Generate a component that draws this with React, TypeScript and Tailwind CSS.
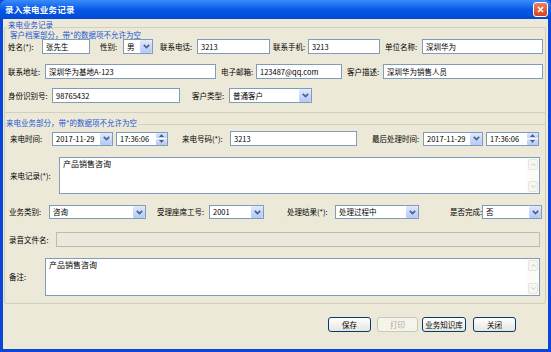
import React from "react";

const FONT = '"Noto Sans CJK SC", "Noto Sans", sans-serif';

function Label({ cls, children }: { cls: string; children: React.ReactNode }) {
  return <span className={`${cls} shrink-0 whitespace-nowrap text-black`}>{children}</span>;
}

function Input({ cls, value }: { cls: string; value?: string }) {
  return (
    <div className={`${cls} h-[15px] shrink-0 border border-[#7F9DB9] bg-white flex items-center px-[3px] whitespace-nowrap overflow-hidden`}>
      {value}
    </div>
  );
}

function Chevron() {
  return (
    <svg width="7" height="5" viewBox="0 0 7 5">
      <path d="M0.8 0.8 L3.5 3.6 L6.2 0.8" stroke="#4D6185" strokeWidth="1.7" fill="none" />
    </svg>
  );
}

function Select({ cls, value, h }: { cls: string; value?: string; h?: string }) {
  return (
    <div className={`${cls} ${h ?? "h-[14px]"} shrink-0 border border-[#7F9DB9] bg-white flex items-center pl-[3px] whitespace-nowrap overflow-hidden`}>
      <span className="flex-1">{value}</span>
      <div className="h-full w-[13px] border-l border-[#FFFFFF] rounded-[2px] bg-linear-to-b from-[#E0E9FE] to-[#B4C9F7] flex items-center justify-center">
        <Chevron />
      </div>
    </div>
  );
}

function Time({ cls, value }: { cls: string; value: string }) {
  return (
    <div className={`${cls} h-[14px] shrink-0 border border-[#7F9DB9] bg-white flex items-center pl-[3px] whitespace-nowrap overflow-hidden`}>
      <span className="flex-1">{value}</span>
      <div className="h-full w-[11px] flex flex-col gap-[1px]">
        <div className="flex-1 rounded-[1px] bg-linear-to-b from-[#E0E9FE] to-[#BCCEF8] flex items-center justify-center">
          <svg width="5" height="3" viewBox="0 0 5 3">
            <path d="M0 3 L2.5 0 L5 3 Z" fill="#4D6185" />
          </svg>
        </div>
        <div className="flex-1 rounded-[1px] bg-linear-to-b from-[#D4E0FC] to-[#B4C9F7] flex items-center justify-center">
          <svg width="5" height="3" viewBox="0 0 5 3">
            <path d="M0 0 L2.5 3 L5 0 Z" fill="#4D6185" />
          </svg>
        </div>
      </div>
    </div>
  );
}

function ScrollBar() {
  return (
    <div className="w-[12px] h-full bg-[#FBFBF8] flex flex-col justify-between p-[1px]">
      <div className="h-[11px] rounded-[2px] border border-[#E6E5DC] bg-[#F7F6F1] flex items-center justify-center">
        <svg width="5" height="3" viewBox="0 0 5 3">
          <path d="M0.5 2.6 L2.5 0.6 L4.5 2.6" stroke="#C9C8BE" strokeWidth="1" fill="none" />
        </svg>
      </div>
      <div className="h-[11px] rounded-[2px] border border-[#E6E5DC] bg-[#F7F6F1] flex items-center justify-center">
        <svg width="5" height="3" viewBox="0 0 5 3">
          <path d="M0.5 0.4 L2.5 2.4 L4.5 0.4" stroke="#C9C8BE" strokeWidth="1" fill="none" />
        </svg>
      </div>
    </div>
  );
}

function TextArea({ cls, value }: { cls: string; value: string }) {
  return (
    <div className={`${cls} shrink-0 border border-[#7F9DB9] bg-white flex`}>
      <div className="flex-1 pl-[3px] pt-[1px] text-[8px] leading-[10px]">{value}</div>
      <ScrollBar />
    </div>
  );
}

function Button({ cls, children, disabled }: { cls: string; children: React.ReactNode; disabled?: boolean }) {
  return (
    <div
      className={`${cls} h-[15px] shrink-0 rounded-[3px] border flex items-center justify-center ${
        disabled
          ? "border-[#C9C7BA] bg-[#F5F4EA] text-[#ACA899]"
          : "border-[#003C74] bg-linear-to-b from-[#FFFFFF] to-[#E6E5DD] text-black"
      }`}
    >
      {children}
    </div>
  );
}

export default function App() {
  return (
    <div
      className="w-[551px] h-[352px] bg-[#0A46D9] flex flex-col text-[7.5px] leading-none overflow-hidden"
      style={{ fontFamily: FONT }}
    >
      {/* Title bar */}
      <div className="h-[19px] shrink-0 flex items-center bg-linear-to-b from-[#3A8CFB] via-[#0758E6] to-[#0449D4] rounded-t-[6px]">
        <span className="ml-[5px] text-white font-bold text-[8.5px] tracking-[0.2px]">录入来电业务记录</span>
        <div className="ml-auto mr-[3px] w-[15px] h-[15px] rounded-[3px] border border-white bg-linear-to-b from-[#EE8060] to-[#D2441E] flex items-center justify-center">
          <svg width="7" height="7" viewBox="0 0 7 7">
            <path d="M1 1 L6 6 M6 1 L1 6" stroke="white" strokeWidth="1.6" />
          </svg>
        </div>
      </div>

      {/* Body */}
      <div className="flex-1 mx-[3px] mb-[3px] bg-[#ECE9D8] flex flex-col">
        {/* Outer group box */}
        <div className="relative mt-[8px] ml-[1px] w-[542px] h-[277px] border border-[#D0D0BF] rounded-[2px] flex flex-col">
          <span className="absolute -top-[7px] left-[2px] px-[1px] bg-[#ECE9D8] text-[#1F4FCF]">来电业务记录</span>

          {/* Section 1 */}
          <div className="mt-[3px] h-[8px] pl-[5px] flex items-center text-[#2457D4]">客户档案部分，带*的数据项不允许为空</div>

          <div className="mt-0 pl-[3px] flex items-center">
            <Label cls="w-[34px]">姓名(*):</Label>
            <Input cls="w-[48px]" value="张先生" />
            <Label cls="ml-[10px] w-[23px]">性别:</Label>
            <Select cls="w-[30px]" value="男" h="h-[15px]" />
            <Label cls="ml-[7px] w-[37px]">联系电话:</Label>
            <Input cls="w-[73px]" value="3213" />
            <Label cls="ml-[3px] w-[35px]">联系手机:</Label>
            <Input cls="w-[72px]" value="3213" />
            <Label cls="ml-[5px] w-[37px]">单位名称:</Label>
            <Input cls="w-[121px]" value="深圳华为" />
          </div>

          <div className="mt-[10px] pl-[3px] flex items-center">
            <Label cls="w-[37px]">联系地址:</Label>
            <Input cls="w-[171px]" value="深圳华为基地A-123" />
            <Label cls="ml-[5px] w-[35px]">电子邮箱:</Label>
            <Input cls="w-[86px]" value="123487@qq.com" />
            <Label cls="ml-[5px] w-[36px]">客户描述:</Label>
            <Input cls="w-[160px]" value="深圳华为销售人员" />
          </div>

          <div className="mt-[9px] pl-[3px] flex items-center">
            <Label cls="w-[44px]">身份识别号:</Label>
            <Input cls="w-[128px]" value="98765432" />
            <Label cls="ml-[12px] w-[37px]">客户类型:</Label>
            <Select cls="w-[83px]" value="普通客户" h="h-[15px]" />
          </div>

          <div className="mt-[9px] h-[1px] bg-[#D0D0BF]" />

          {/* Section 2 */}
          <div className="relative mt-[11px] border-t border-[#D0D0BF] flex flex-col">
            <span className="absolute -top-[6px] left-[1px] pr-[1px] bg-[#ECE9D8] text-[#2457D4]">来电业务部分，带*的数据项不允许为空</span>

            <div className="mt-[6px] pl-[5px] flex items-center">
              <Label cls="w-[42px]">来电时间:</Label>
              <Select cls="w-[61px]" value="2017-11-29" />
              <Time cls="ml-[3px] w-[52px]" value="17:36:06" />
              <Label cls="ml-[14px] w-[48px]">来电号码(*):</Label>
              <Input cls="w-[127px]" value="3213" />
              <Label cls="ml-[15px] w-[51px]">最后处理时间:</Label>
              <Select cls="w-[60px]" value="2017-11-29" />
              <Time cls="ml-[3px] w-[53px]" value="17:36:06" />
            </div>

            <div className="mt-[11px] pl-[5px] flex items-center">
              <Label cls="w-[49px]">来电记录(*):</Label>
              <TextArea cls="w-[481px] h-[37px]" value="产品销售咨询" />
            </div>

            <div className="mt-[11px] pl-[4px] flex items-center">
              <Label cls="w-[40px]">业务类别:</Label>
              <Select cls="w-[97px]" value="咨询" />
              <Label cls="ml-[11px] w-[52px]">受理座席工号:</Label>
              <Select cls="w-[55px]" value="2001" />
              <Label cls="ml-[23px] w-[48px]">处理结果(*):</Label>
              <Select cls="w-[84px]" value="处理过程中" />
              <Label cls="ml-[31px] w-[32px]">是否完成:</Label>
              <Select cls="w-[60px]" value="否" />
            </div>

            <div className="mt-[13px] pl-[4px] flex items-center">
              <Label cls="w-[47px]">录音文件名:</Label>
              <div className="w-[484px] h-[15px] shrink-0 border border-[#BDBCAE] bg-[#EBE9DB]" />
            </div>

            <div className="mt-[11px] pl-[4px] flex items-center">
              <Label cls="w-[36px]">备注:</Label>
              <TextArea cls="w-[495px] h-[38px]" value="产品销售咨询" />
            </div>
          </div>
        </div>

        {/* Buttons */}
        <div className="mt-[13px] mr-[32px] flex justify-end items-center">
          <Button cls="w-[43px]">保存</Button>
          <Button cls="ml-[6px] w-[41px]" disabled>
            打印
          </Button>
          <Button cls="ml-[4px] w-[44px]">业务知识库</Button>
          <Button cls="ml-[7px] w-[43px]">关闭</Button>
        </div>
      </div>
    </div>
  );
}
